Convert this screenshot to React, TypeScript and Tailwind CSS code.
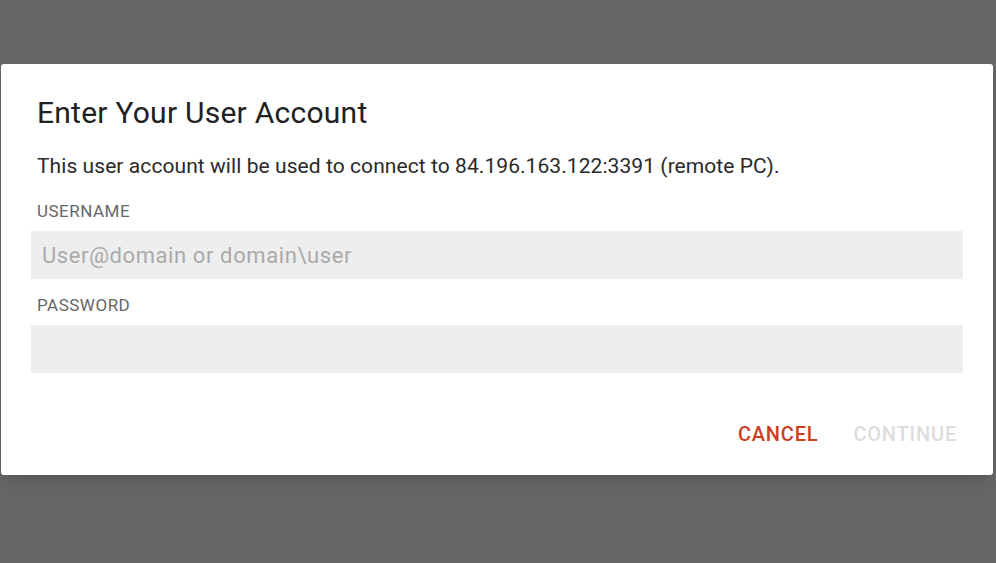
import React, { useState } from 'react';

const App: React.FC = () => {
  const [username, setUsername] = useState('');
  const [password, setPassword] = useState('');
  const canContinue = username.length > 0;

  return (
    <div className="w-[996px] h-[563px] bg-[#666666] overflow-hidden font-['Roboto',sans-serif]">
      <div className="ml-[1px] mt-[64px] w-[992px] bg-white rounded-[3px] shadow-lg px-[30px] pt-[31px] pb-[29px]">
        <h2 className="pl-[6px] text-[30px] leading-[36px] tracking-[0.25px] text-[#212121]">
          Enter Your User Account
        </h2>
        <p className="pl-[6px] mt-[21px] text-[21px] leading-[28px] tracking-[0.07px] text-[#2a2a2a]">
          This user account will be used to connect to 84.196.163.122:3391 (remote PC).
        </p>

        {/* Username */}
        <label className="block pl-[6px] mt-[21px] text-[17px] leading-[20px] tracking-[0.5px] text-[#666666]">USERNAME</label>
        <input
          type="text"
          value={username}
          onChange={e => setUsername(e.target.value)}
          placeholder="User@domain or domain\user"
          className="mt-[10px] w-full h-[48px] bg-[#eeeeee] px-[11px] text-[22px] tracking-[0.6px] text-[#333] placeholder:text-[#aaaaaa] outline-none"
        />

        {/* Password */}
        <label className="block pl-[6px] mt-[16px] text-[17px] leading-[20px] tracking-[0.5px] text-[#666666]">PASSWORD</label>
        <input
          type="password"
          value={password}
          onChange={e => setPassword(e.target.value)}
          className="mt-[10px] w-full h-[48px] bg-[#eeeeee] px-[11px] text-[22px] text-[#333] outline-none"
        />

        <div className="mt-[49px] flex justify-end gap-[35px] pr-[6px]">
          <button className="text-[20px] leading-[24px] font-medium tracking-[0.8px] text-[#c9401f]">CANCEL</button>
          <button
            disabled={!canContinue}
            className={`text-[20px] leading-[24px] font-medium tracking-[0.8px] ${canContinue ? 'text-[#c9401f]' : 'text-[#dcdcdc]'}`}
          >
            CONTINUE
          </button>
        </div>
      </div>
    </div>
  );
};

export default App;
